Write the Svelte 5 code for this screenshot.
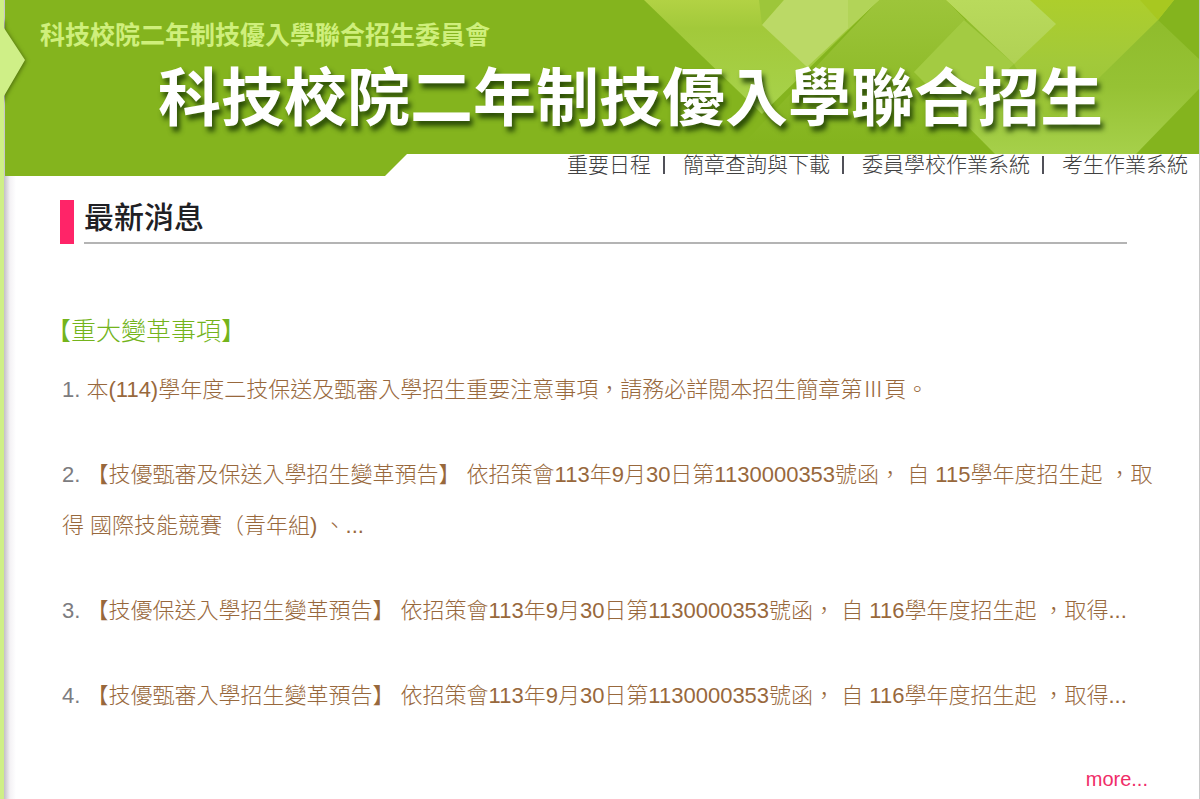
<script lang="ts">
  type NavLink = { label: string; href: string };
  type NewsItem = { id: number; text: string };

  const navLinks: NavLink[] = [
    { label: "重要日程", href: "#schedule" },
    { label: "簡章查詢與下載", href: "#brochure" },
    { label: "委員學校作業系統", href: "#schools" },
    { label: "考生作業系統", href: "#students" },
  ];

  const newsItems: NewsItem[] = [
    { id: 1, text: "本(114)學年度二技保送及甄審入學招生重要注意事項，請務必詳閱本招生簡章第Ⅲ頁。" },
    {
      id: 2,
      text: "【技優甄審及保送入學招生變革預告】 依招策會113年9月30日第1130000353號函， 自 115學年度招生起 ，取得 國際技能競賽（青年組) 、...",
    },
    { id: 3, text: "【技優保送入學招生變革預告】 依招策會113年9月30日第1130000353號函， 自 116學年度招生起 ，取得..." },
    { id: 4, text: "【技優甄審入學招生變革預告】 依招策會113年9月30日第1130000353號函， 自 116學年度招生起 ，取得..." },
  ];
</script>

<div class="page" lang="zh-Hant">
  <header class="banner">
    <svg class="banner-art" viewBox="0 0 1200 176" preserveAspectRatio="none" aria-hidden="true">
      <defs>
        <linearGradient id="wedge" x1="0" y1="0" x2="0" y2="1">
          <stop offset="0" stop-color="#b2d244" />
          <stop offset="0.25" stop-color="#a2c93a" />
          <stop offset="1" stop-color="#a8d34c" />
        </linearGradient>
        <linearGradient id="fade" x1="0" y1="0" x2="0" y2="1">
          <stop offset="0" stop-color="#9dc53a" />
          <stop offset="1" stop-color="#84b41e" />
        </linearGradient>
        <linearGradient id="lime" x1="0" y1="0" x2="0" y2="1">
          <stop offset="0" stop-color="#adce2c" />
          <stop offset="0.5" stop-color="#a2c93a" />
          <stop offset="1" stop-color="#96c234" />
        </linearGradient>
        <linearGradient id="leaf" x1="0" y1="0" x2="0" y2="1">
          <stop offset="0" stop-color="#8fbc2c" />
          <stop offset="0.5" stop-color="#96c234" />
          <stop offset="1" stop-color="#a6d04a" />
        </linearGradient>
        <linearGradient id="square" x1="0" y1="0" x2="0" y2="1">
          <stop offset="0" stop-color="#b9da5c" />
          <stop offset="1" stop-color="#b0d154" />
        </linearGradient>
      </defs>
      <path d="M5 0H1200V176H1199V154H407L385 176H5Z" fill="#84b41e" />
      <path d="M879 0H946L985 40V142H745Z" fill="url(#fade)" />
      <path d="M644 0H879L762 114Z" fill="url(#wedge)" />
      <path d="M759 0H784L762 25Z" fill="#9dc63a" />
      <path d="M784 0H879L807 67L762 25Z" fill="#bbd966" />
      <path d="M848 0H879L848 29Z" fill="#b2d458" />
      <path d="M964 20L914 72L995 154H1136L1200 88V60L1158 20Z" fill="url(#leaf)" />
      <path d="M964 20L914 72L958 116L1014 64Z" fill="#a3cb42" />
      <path d="M946 0H1174L1158 20L1050 126L1014 64Z" fill="url(#lime)" />
      <path d="M1140 0H1174L1158 20Z" fill="#a8c820" />
      <path d="M946 0H1030L1056 24L1014 64Z" fill="url(#square)" />
    </svg>
    <p class="organizer">科技校院二年制技優入學聯合招生委員會</p>
    <h1>科技校院二年制技優入學聯合招生</h1>
    <nav aria-label="主選單">
      {#each navLinks as link, index (link.href)}
        {#if index > 0}<span class="divider" aria-hidden="true"></span>{/if}
        <a href={link.href}>{link.label}</a>
      {/each}
    </nav>
  </header>

  <main>
    <div class="section-title">
      <span class="marker"></span>
      <h2>最新消息</h2>
    </div>

    <h3>【重大變革事項】</h3>
    <ul class="news">
      {#each newsItems as item (item.id)}
        <li>{item.id}. <a href={`#news-${item.id}`}>{item.text}</a></li>
      {/each}
    </ul>
    <a class="more" href="#more">more...</a>
  </main>

  <svg class="notch" viewBox="0 0 30 80" aria-hidden="true">
    <path d="M0 0H4V8L25 40L4 76V80H0Z" />
  </svg>
</div>

<style>
  :global(body) {
    margin: 0;
  }
  .page {
    position: relative;
    box-sizing: border-box;
    min-height: 100vh;
    overflow: hidden;
    border-left: 4px solid #cfef87;
    border-right: 1px solid #c8c8c8;
    background: linear-gradient(to right, #c4c0c8, #f4f2f5 6px, #fff 12px);
    color: #7c7c80;
    font-family: "Liberation Sans", "Noto Sans CJK TC", sans-serif;
    font-size: 22px;
    font-weight: 300;
  }
  a {
    color: inherit;
    text-decoration: none;
  }
  a:hover {
    text-decoration: underline;
  }
  .banner {
    position: relative;
    display: flex;
    flex-direction: column;
    height: 176px;
  }
  .banner-art {
    position: absolute;
    inset: 0 -1px auto -4px;
    width: calc(100% + 5px);
    height: 176px;
  }
  .organizer,
  h1,
  nav {
    position: relative;
  }
  .organizer {
    margin: 16px 0 0 36px;
    color: #cfef7c;
    font-size: 25px;
    font-weight: 700;
    line-height: 38px;
  }
  h1 {
    margin: 0 0 0 154px;
    color: #fff;
    font-size: 63px;
    font-weight: 700;
    line-height: 88px;
    text-shadow: 3px 5px 5px rgb(20 50 0 / 80%);
    white-space: nowrap;
  }
  nav {
    display: flex;
    justify-content: flex-end;
    align-items: center;
    margin: 12px 11px 0 0;
    color: #404040;
    font-size: 21px;
    line-height: 22px;
  }
  .divider {
    width: 2px;
    height: 18px;
    margin: 0 18px 0 12px;
    background: #505058;
  }
  main {
    display: flex;
    flex-direction: column;
    padding: 24px 36px 0 56px;
  }
  .section-title {
    display: flex;
    gap: 10px;
    height: 44px;
    margin-right: 36px;
  }
  .marker {
    width: 14px;
    background: #ff2468;
  }
  h2 {
    flex: 1;
    margin: 0;
    border-bottom: 2px solid #b4b4b4;
    color: #202024;
    font-family: "Noto Sans CJK TC", sans-serif;
    font-size: 30px;
    font-weight: 500;
    line-height: 30px;
  }
  h3 {
    margin: 68px 0 0 -14px;
    color: #74b41c;
    font-size: 25px;
    font-weight: 300;
    line-height: 38px;
  }
  .news {
    display: flex;
    flex-direction: column;
    gap: 34px;
    margin: 14px 0 0 2px;
    padding: 0;
    line-height: 51px;
    list-style: none;
  }
  .news a {
    color: #98683c;
  }
  .more {
    align-self: flex-end;
    margin: 46px 15px 0 0;
    color: #f02c68;
    font-size: 20px;
    line-height: 24px;
  }
  .notch {
    position: absolute;
    top: 20px;
    left: -4px;
    width: 30px;
    height: 80px;
    fill: #cfef87;
    filter: drop-shadow(1px 1px 2px rgb(40 60 0 / 60%));
  }
</style>
